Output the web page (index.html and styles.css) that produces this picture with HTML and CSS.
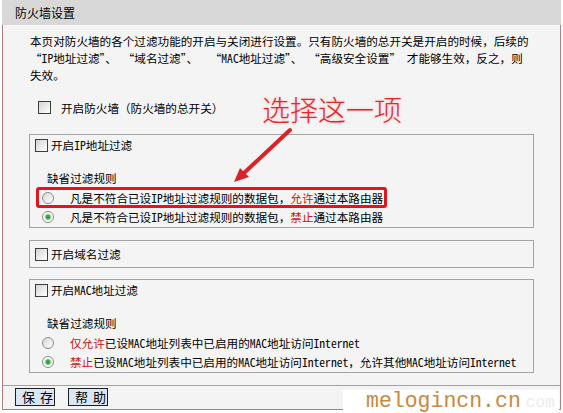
FILE: index.html
```html
<!DOCTYPE html>
<html lang="zh-CN">

<head>
    <meta charset="UTF-8">
    <meta name="viewport" content="width=device-width, initial-scale=1.0">
    <title>防火墙设置</title>
    <link rel="stylesheet" href="styles.css">
</head>

<body>
    <div class="frame">
        <div class="title-bar">防火墙设置</div>
        <div class="panel">
            <p class="intro">本页对防火墙的各个过滤功能的开启与关闭进行设置。只有防火墙的总开关是开启的时候，后续的<br>“IP地址过滤”、 “域名过滤”、&nbsp; “MAC地址过滤”、 “高级安全设置” 才能够生效，反之，则<br>失效。</p>

            <div class="master">
                <span class="check"></span>开启防火墙（防火墙的总开关）
            </div>

            <div class="group group-first">
                <div class="row-check"><span class="check"></span>开启IP地址过滤</div>
                <div class="rule-label">缺省过滤规则</div>
                <div class="rules">
                    <div class="rule"><span class="radio"></span>凡是不符合已设IP地址过滤规则的数据包，<span class="red">允许</span>通过本路由器</div>
                    <div class="rule"><span class="radio on"></span>凡是不符合已设IP地址过滤规则的数据包，<span class="red">禁止</span>通过本路由器</div>
                </div>
            </div>

            <div class="group group-simple">
                <div class="row-check"><span class="check"></span>开启域名过滤</div>
            </div>

            <div class="group group-mac">
                <div class="row-check"><span class="check"></span>开启MAC地址过滤</div>
                <div class="rule-label">缺省过滤规则</div>
                <div class="rules">
                    <div class="rule"><span class="radio"></span><span class="red">仅允许</span>已设MAC地址列表中已启用的MAC地址访问Internet</div>
                    <div class="rule"><span class="radio on"></span><span class="red">禁止</span>已设MAC地址列表中已启用的MAC地址访问Internet，允许其他MAC地址访问Internet</div>
                </div>
            </div>

            <div class="footer">
                <button class="btn">保存</button>
                <button class="btn">帮助</button>
            </div>
        </div>
    </div>

    <!-- annotations drawn over the screenshot -->
    <div class="hint">选择这一项</div>
    <svg class="arrow" width="563" height="413" viewBox="0 0 563 413">
        <line x1="290" y1="130" x2="244" y2="173" stroke="#d9232a" stroke-width="4" stroke-linecap="round" />
        <polygon points="234,182 240,168 249,177" fill="#d9232a" />
    </svg>
    <div class="highlight"></div>
    <div class="watermark">melogincn.cn<span class="ghost">com</span></div>
</body>
</html>
```

FILE: styles.css
```css
body {
    margin: 0;
    position: relative;
    width: 563px;
    height: 413px;
    background-color: #ffffff;
    font-family: "Noto Sans Mono CJK SC", "Noto Sans CJK SC", sans-serif;
    font-size: 11.6px;
    color: #000;
    overflow: hidden;
}

.frame {
    margin-left: 2px;
    width: 559px;
}

.title-bar {
    height: 25px;
    line-height: 25px;
    padding-left: 13px;
    background-color: #d8d8d8;
    font-size: 12px;
}

.panel {
    background-color: #f4f4f4;
    border: 1px solid #b47c7c;
    border-top: none;
}

.intro {
    margin: 0;
    padding: 8px 0 0 27px;
    line-height: 17px;
    white-space: nowrap;
}

.master {
    display: flex;
    align-items: center;
    height: 17px;
    margin-top: 15px;
    padding-left: 35px;
}

.master .check {
    margin-right: 10px;
}

.check {
    display: inline-block;
    box-sizing: border-box;
    width: 13px;
    height: 13px;
    margin-right: 3px;
    border: 1px solid #3c3c3c;
    background: linear-gradient(135deg, #d4d4d4, #ffffff);
}

.radio {
    display: inline-block;
    box-sizing: border-box;
    width: 12px;
    height: 12px;
    margin-right: 16px;
    border: 1px solid #8c8c8c;
    border-radius: 50%;
    background: linear-gradient(135deg, #d8d8d8, #ffffff);
}

.radio.on {
    background: radial-gradient(circle, #2f9a3a 0, #3fae48 2px, #bfe3bf 3px, #ffffff 4px);
}

.group {
    margin-left: 26px;
    width: 505px;
    box-sizing: border-box;
    border: 1px solid #a4a4a4;
}

.group-first {
    margin-top: 18px;
}

.group-simple {
    margin-top: 12px;
    padding: 3px 0;
}

.group-mac {
    margin-top: 11px;
}

.row-check {
    display: flex;
    align-items: center;
    height: 20px;
    padding-left: 5px;
}

.rule-label {
    margin-top: 15px;
    height: 17px;
    line-height: 17px;
    padding-left: 17px;
}

.rules {
    margin-top: 1px;
    padding-bottom: 1px;
}

.rule {
    display: flex;
    align-items: center;
    height: 19px;
    padding-left: 12px;
    white-space: nowrap;
}

.red {
    color: #cc1111;
}

.footer {
    margin-top: 12px;
    border-top: 1px solid #c49494;
    padding: 2px 0 3px 12px;
    display: flex;
    gap: 13px;
}

.btn {
    width: 40px;
    height: 18px;
    padding: 0 0 0 6px;
    border: 1px solid #1e1e1e;
    background-color: #d9e6f6;
    font-family: "Noto Sans CJK SC", sans-serif;
    font-size: 13px;
    line-height: 16px;
    letter-spacing: 5px;
    white-space: nowrap;
    text-align: left;
    color: #000;
}

.hint {
    position: absolute;
    left: 262px;
    top: 95px;
    font-family: "Noto Sans CJK SC", sans-serif;
    font-weight: 300;
    font-size: 28px;
    line-height: 28px;
    color: #e02a2a;
    text-shadow: 0 0 3px #f6b8b8;
}

.arrow {
    position: absolute;
    left: 0;
    top: 0;
    pointer-events: none;
}

.highlight {
    position: absolute;
    left: 36px;
    top: 187px;
    width: 351px;
    height: 21px;
    box-sizing: border-box;
    border: 3px solid #e3141c;
    border-radius: 3px;
}

.watermark {
    position: absolute;
    left: 343px;
    top: 390px;
    width: 216px;
    height: 23px;
    padding-left: 23px;
    box-sizing: border-box;
    background-color: #ffffff;
    font-family: "Liberation Mono", monospace;
    font-size: 21.5px;
    line-height: 23px;
    color: #c8883c;
    white-space: nowrap;
}

.ghost {
    margin-left: 5px;
    font-size: 16px;
    color: #ececec;
}
```
